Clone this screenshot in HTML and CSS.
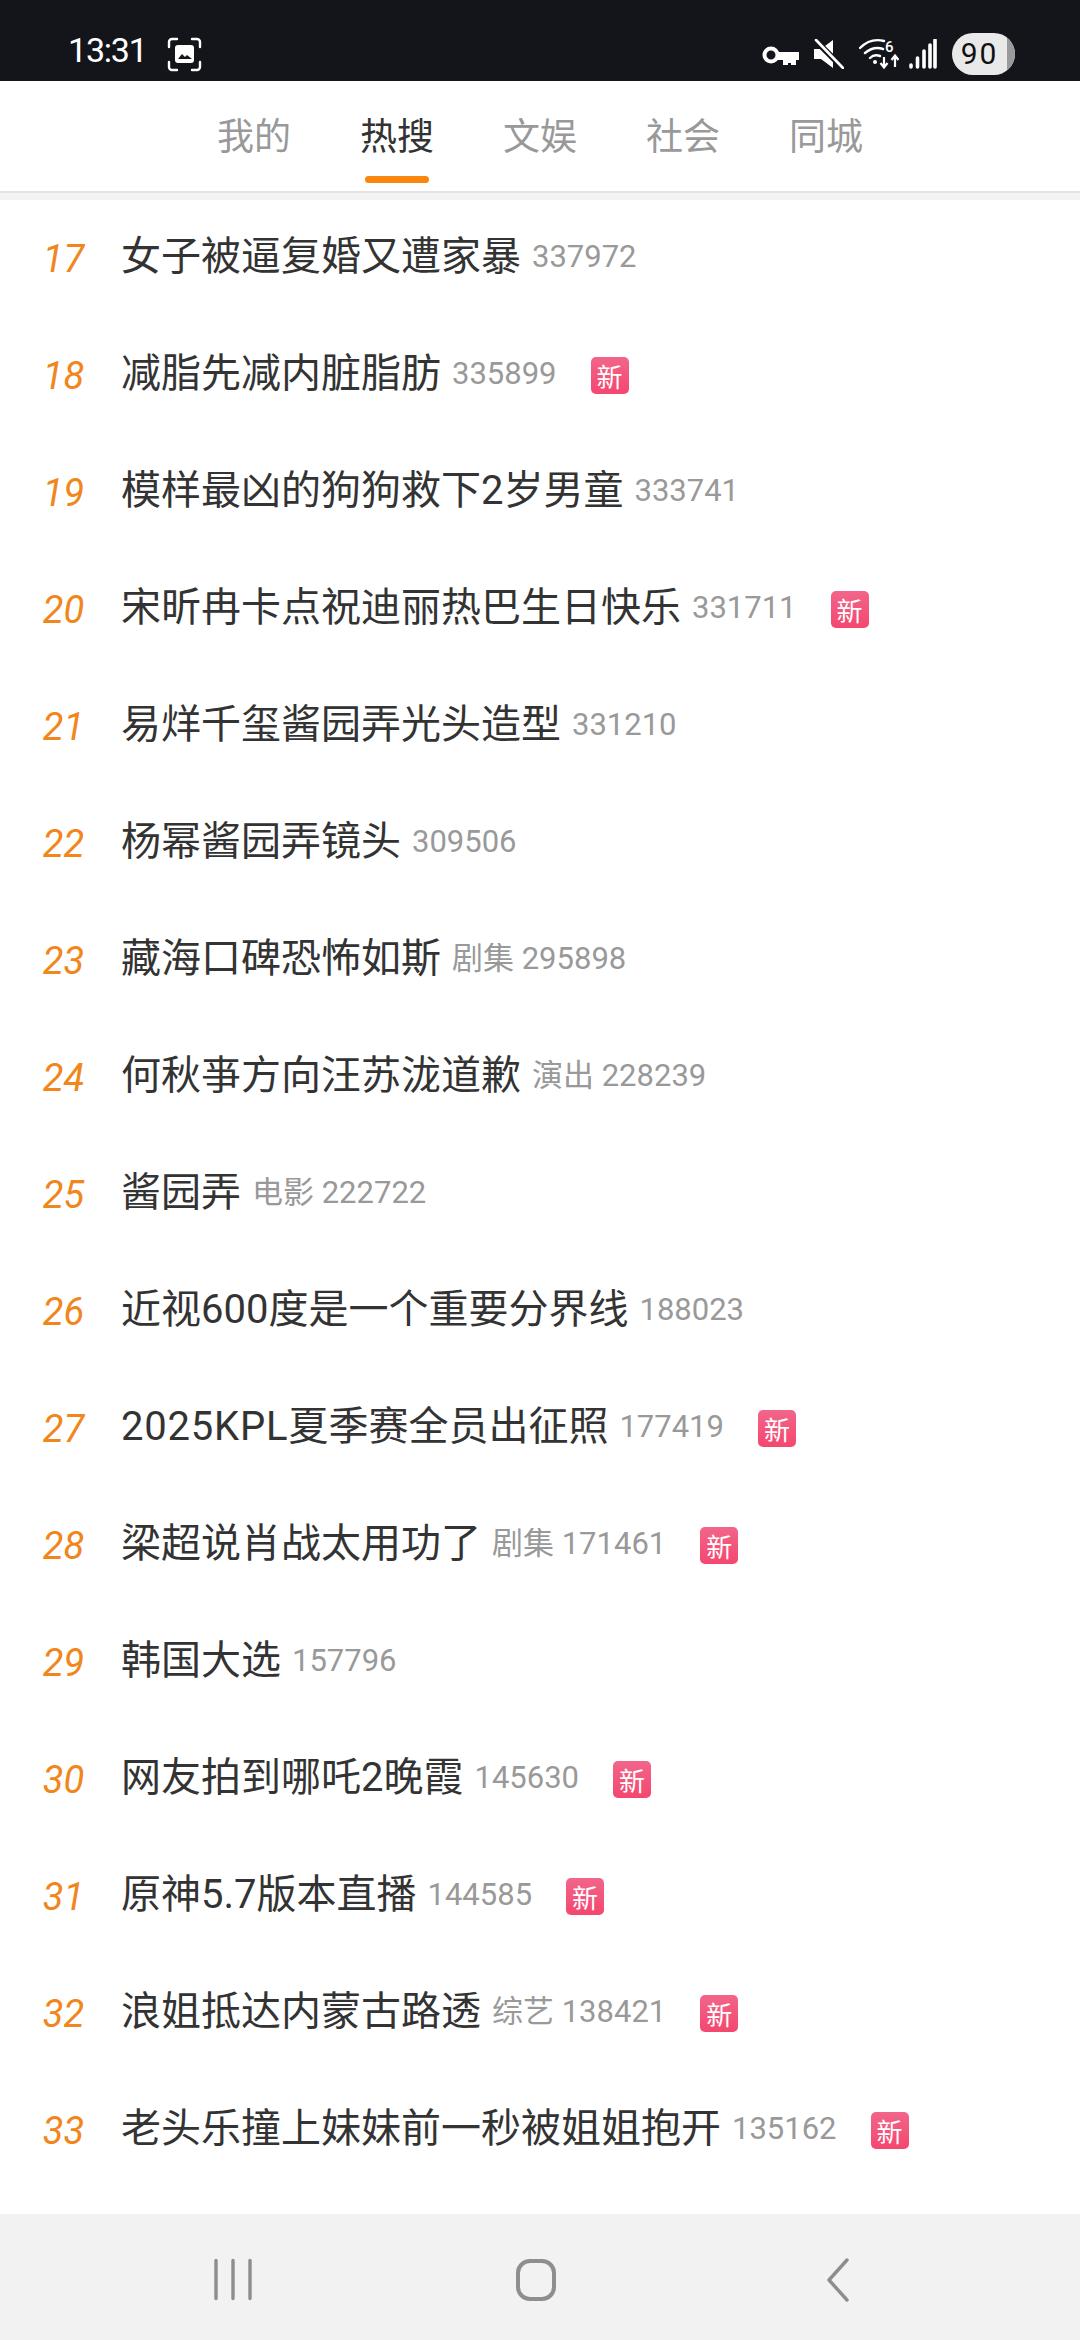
FILE: index.html
```html
<!DOCTYPE html>
<html lang="zh">
<head>
<meta charset="utf-8">
<title>热搜</title>
<link rel="stylesheet" href="styles.css">
</head>
<body>
<div class="page">
  <header class="status">
    <div class="status-left">
      <span class="clock">13:31</span>
      <svg class="shot" viewBox="0 0 35 35" width="35" height="35"><path d="M2 10V5a3 3 0 0 1 3-3h5M25 2h5a3 3 0 0 1 3 3v5M33 25v5a3 3 0 0 1-3 3h-5M10 33H5a3 3 0 0 1-3-3v-5" fill="none" stroke="#fff" stroke-width="2.4" stroke-linecap="round"/><rect x="8" y="8" width="19" height="18" rx="3" fill="#fff"/><path d="M11 22l4-5 3 3 2-2 5 4z" fill="#14151a"/></svg>
    </div>
    <div class="status-right">
      <svg class="key" viewBox="0 0 37 19" width="37" height="19"><circle cx="9" cy="9" r="6.5" fill="none" stroke="#fff" stroke-width="4"/><path d="M15 6h22v8h-3v5h-5v-2h-3v2h-5v-5h-6z" fill="#fff"/></svg>
      <svg class="mute" viewBox="0 0 30 30" width="30" height="30"><path d="M0 10h7L19 1v28L7 20H0z" fill="#fff"/><path d="M1 1l28 28" stroke="#14151a" stroke-width="6"/><path d="M2 1l27 28" stroke="#fff" stroke-width="2.6" stroke-linecap="round"/></svg>
      <svg class="wifi" viewBox="0 0 40 34" width="40" height="34"><path d="M1 11C8 4 17 2 25 4M6 16c6-5 12-6 18-4M11 21c3-3 7-3 10-2" fill="none" stroke="#fff" stroke-width="2.4" stroke-linecap="round"/><circle cx="16" cy="25" r="2" fill="#fff"/><text x="26" y="15" class="wifi-six">6</text><path d="M25 20v10m-3.500-4l3.500 4.500 3.500-4.500M36 30V19m-3.500 4l3.500-4.500 3.500 4.500" fill="none" stroke="#fff" stroke-width="2.2"/></svg>
      <svg class="signal" viewBox="0 0 28 30" width="28" height="30"><path d="M2 26v2M8.500 19v9M15 12v16M21 6v22M26 1v27" stroke="#fff" stroke-width="3.600" stroke-linecap="round"/></svg>
      <div class="battery"><span class="battery-value">90</span><span class="battery-end"></span></div>
    </div>
  </header>

  <nav class="tabs">
    <span class="tab">我的</span>
    <span class="tab active">热搜</span>
    <span class="tab">文娱</span>
    <span class="tab">社会</span>
    <span class="tab">同城</span>
  </nav>
  <div class="divider"></div>

  <main class="list">
    <div class="row"><span class="rank">17</span><span class="title">女子被逼复婚又遭家暴</span><span class="count">337972</span></div>
    <div class="row"><span class="rank">18</span><span class="title">减脂先减内脏脂肪</span><span class="count">335899</span><span class="badge">新</span></div>
    <div class="row"><span class="rank">19</span><span class="title">模样最凶的狗狗救下2岁男童</span><span class="count">333741</span></div>
    <div class="row"><span class="rank">20</span><span class="title">宋昕冉卡点祝迪丽热巴生日快乐</span><span class="count">331711</span><span class="badge">新</span></div>
    <div class="row"><span class="rank">21</span><span class="title">易烊千玺酱园弄光头造型</span><span class="count">331210</span></div>
    <div class="row"><span class="rank">22</span><span class="title">杨幂酱园弄镜头</span><span class="count">309506</span></div>
    <div class="row"><span class="rank">23</span><span class="title">藏海口碑恐怖如斯</span><span class="count">剧集 295898</span></div>
    <div class="row"><span class="rank">24</span><span class="title">何秋亊方向汪苏泷道歉</span><span class="count">演出 228239</span></div>
    <div class="row"><span class="rank">25</span><span class="title">酱园弄</span><span class="count">电影 222722</span></div>
    <div class="row"><span class="rank">26</span><span class="title">近视600度是一个重要分界线</span><span class="count">188023</span></div>
    <div class="row"><span class="rank">27</span><span class="title"><span class="latin">2025KPL</span>夏季赛全员出征照</span><span class="count">177419</span><span class="badge">新</span></div>
    <div class="row"><span class="rank">28</span><span class="title">梁超说肖战太用功了</span><span class="count">剧集 171461</span><span class="badge">新</span></div>
    <div class="row"><span class="rank">29</span><span class="title">韩国大选</span><span class="count">157796</span></div>
    <div class="row"><span class="rank">30</span><span class="title">网友拍到哪吒2晚霞</span><span class="count">145630</span><span class="badge">新</span></div>
    <div class="row"><span class="rank">31</span><span class="title">原神5.7版本直播</span><span class="count">144585</span><span class="badge">新</span></div>
    <div class="row"><span class="rank">32</span><span class="title">浪姐抵达内蒙古路透</span><span class="count">综艺 138421</span><span class="badge">新</span></div>
    <div class="row"><span class="rank">33</span><span class="title">老头乐撞上妹妹前一秒被姐姐抱开</span><span class="count">135162</span><span class="badge">新</span></div>
  </main>

  <footer class="navbar">
    <svg class="nav-icon" viewBox="0 0 40 44" width="40" height="44"><path d="M3 2.500v38M20 2.500v38M37 2.500v38" stroke="#8e8e8e" stroke-width="3.400" stroke-linecap="round"/></svg>
    <svg class="nav-icon" viewBox="0 0 42 44" width="42" height="44"><rect x="3" y="3" width="36" height="38" rx="12" fill="none" stroke="#8e8e8e" stroke-width="4"/></svg>
    <svg class="nav-icon" viewBox="0 0 24 44" width="24" height="44"><path d="M21 2L3 22l18 20" fill="none" stroke="#8e8e8e" stroke-width="3.400" stroke-linecap="round" stroke-linejoin="round"/></svg>
  </footer>
</div>
</body>
</html>
```
FILE: styles.css
```css
* { box-sizing: border-box; }
html, body { margin: 0; padding: 0; background: #fff; }
.page {
  width: 1080px;
  height: 2340px;
  display: flex;
  flex-direction: column;
  font-family: "Noto Sans CJK SC", "Noto Sans", sans-serif;
  overflow: hidden;
}
.status {
  height: 81px;
  flex: none;
  background: #14151a;
  display: flex;
  justify-content: space-between;
  align-items: center;
  padding: 27px 65px 0 68px;
}
.status-left { display: flex; align-items: center; gap: 20px; }
.clock {
  font-family: "Roboto", sans-serif;
  font-size: 34px;
  letter-spacing: -1.2px;
  color: #fff;
  line-height: 40px;
  margin-bottom: 8px;
}
.status-right { display: flex; align-items: center; gap: 15px; }
.key { margin-top: 2px; }
.signal { margin-left: -5px; }
.wifi-six { font-family: "Roboto", sans-serif; font-size: 15px; font-weight: 500; fill: #fff; }
.battery {
  width: 63px;
  height: 42px;
  border-radius: 21px;
  background: #e9e9e9;
  display: flex;
  overflow: hidden;
}
.battery-value {
  flex: 1;
  text-align: center;
  font-family: "Roboto", sans-serif;
  font-size: 30px;
  line-height: 42px;
  letter-spacing: 2px;
  color: #111;
}
.battery-end { width: 8px; background: #9a9a9a; }

.tabs {
  height: 110px;
  flex: none;
  display: flex;
  justify-content: center;
  align-items: flex-start;
  gap: 69px;
  padding-top: 30px;
  background: #fff;
}
.tab {
  position: relative;
  font-size: 37px;
  line-height: 46px;
  color: #999;
}
.tab.active { color: #333; }
.tab.active::after {
  content: "";
  position: absolute;
  left: 5px;
  right: 5px;
  top: 65px;
  height: 7px;
  border-radius: 4px;
  background: #fb860f;
}
.divider {
  height: 9px;
  flex: none;
  background: #f3f3f3;
  border-top: 2px solid #e4e4e4;
}
.list { flex: 1; background: #fff; }
.row {
  height: 117px;
  display: flex;
  align-items: center;
}
.rank {
  width: 121px;
  padding-left: 6px;
  flex: none;
  text-align: center;
  font-family: "Roboto", sans-serif;
  font-style: italic;
  font-size: 38px;
  color: #f0861c;
}
.title {
  font-family: "Roboto", "Noto Sans CJK SC", sans-serif;
  font-size: 40px;
  line-height: 50px;
  color: #333;
  margin-bottom: 4px;
}
.latin { letter-spacing: 0.8px; }
.count {
  font-family: "Roboto", "Noto Sans CJK SC", sans-serif;
  margin-left: 11px;
  font-size: 31px;
  line-height: 40px;
  color: #999;
  margin-bottom: 3px;
}
.badge {
  margin-left: 34px;
  width: 38px;
  height: 37px;
  border-radius: 5px;
  background: linear-gradient(#f2658a, #f4476f);
  color: #fff;
  font-size: 26px;
  line-height: 37px;
  text-align: center;
}
.navbar {
  height: 126px;
  flex: none;
  background: #f2f2f2;
  display: grid;
  grid-template-columns: repeat(3, 302.5px);
  justify-items: center;
  align-items: center;
  padding: 6px 0 0 82px;
}
```
